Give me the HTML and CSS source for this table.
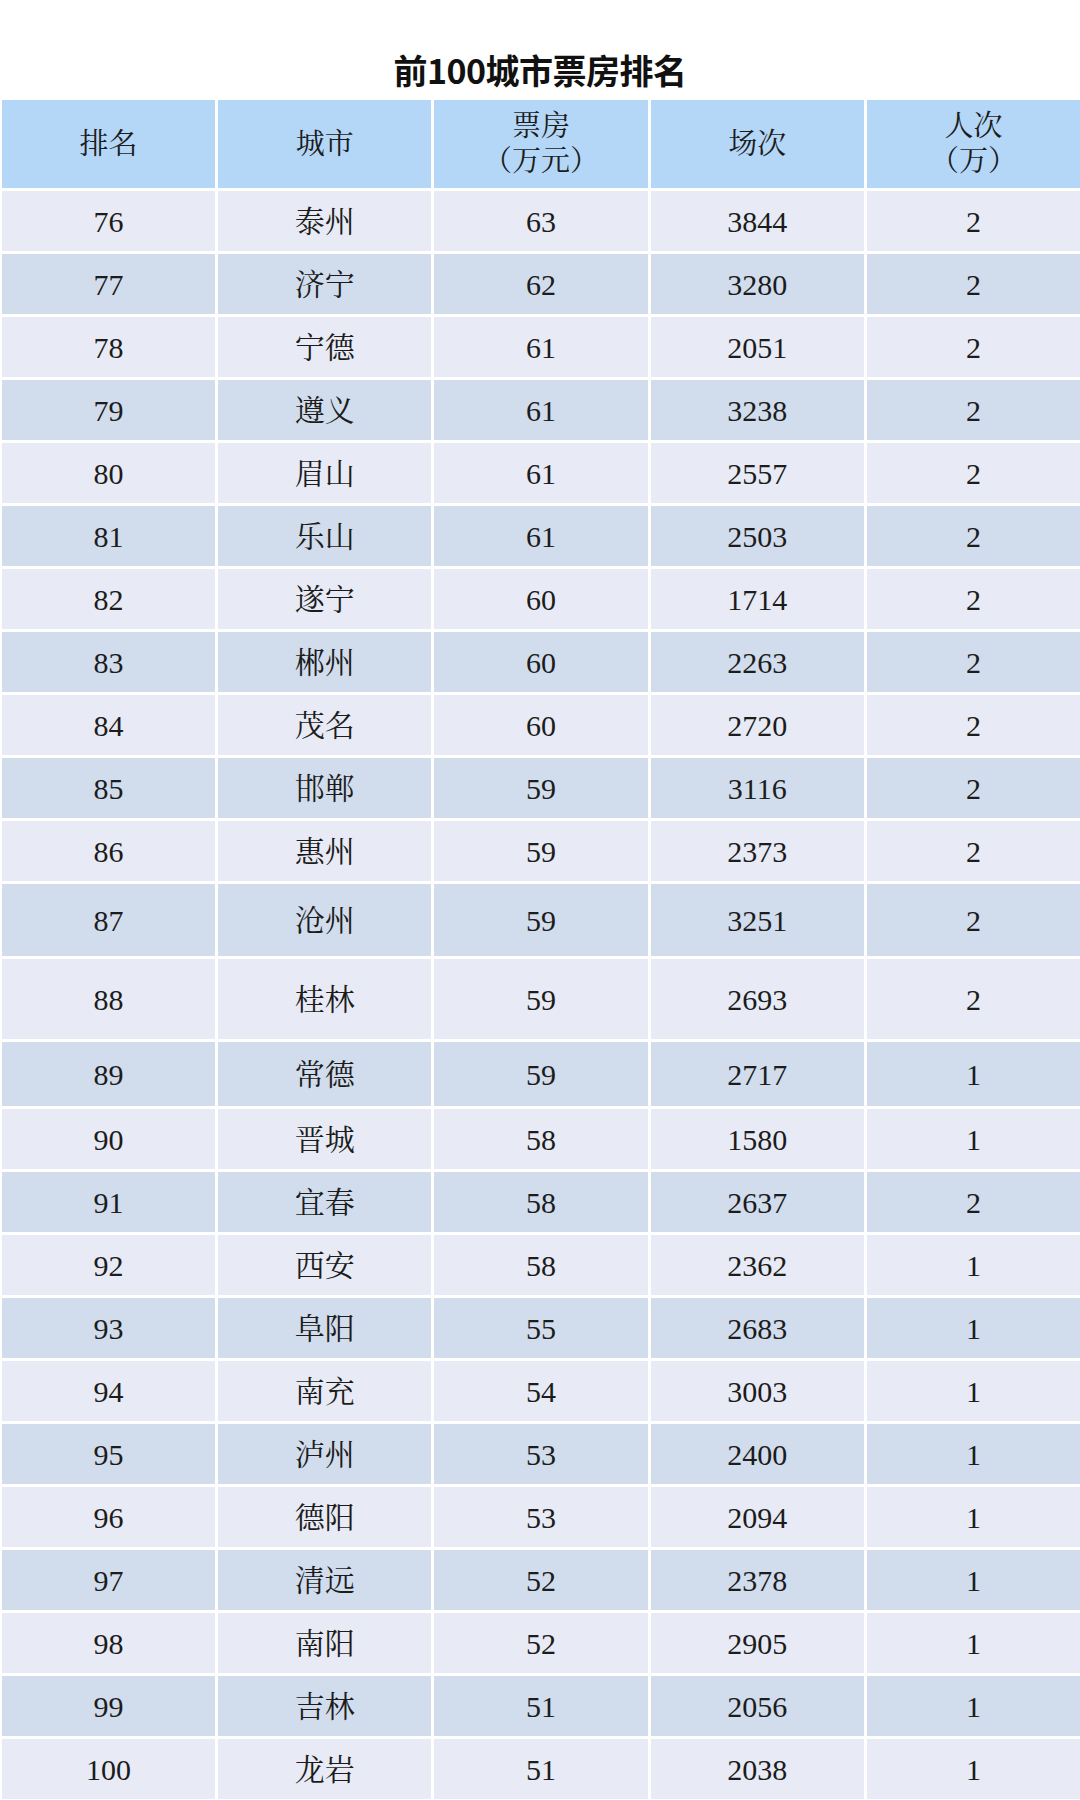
FILE: index.html
```html
<!DOCTYPE html>
<html lang="zh-CN">
<head>
<meta charset="utf-8">
<title>前100城市票房排名</title>
<link rel="stylesheet" href="styles.css">
</head>
<body>
<div class="page">
  <h1 class="title">前100城市票房排名</h1>
  <div class="table">
    <div class="cell head">排名</div>
    <div class="cell head">城市</div>
    <div class="cell head"><span>票房</span><span>（万元）</span></div>
    <div class="cell head">场次</div>
    <div class="cell head"><span>人次</span><span>（万）</span></div>

    <div class="cell odd">76</div><div class="cell odd">泰州</div><div class="cell odd">63</div><div class="cell odd">3844</div><div class="cell odd">2</div>
    <div class="cell even">77</div><div class="cell even">济宁</div><div class="cell even">62</div><div class="cell even">3280</div><div class="cell even">2</div>
    <div class="cell odd">78</div><div class="cell odd">宁德</div><div class="cell odd">61</div><div class="cell odd">2051</div><div class="cell odd">2</div>
    <div class="cell even">79</div><div class="cell even">遵义</div><div class="cell even">61</div><div class="cell even">3238</div><div class="cell even">2</div>
    <div class="cell odd">80</div><div class="cell odd">眉山</div><div class="cell odd">61</div><div class="cell odd">2557</div><div class="cell odd">2</div>
    <div class="cell even">81</div><div class="cell even">乐山</div><div class="cell even">61</div><div class="cell even">2503</div><div class="cell even">2</div>
    <div class="cell odd">82</div><div class="cell odd">遂宁</div><div class="cell odd">60</div><div class="cell odd">1714</div><div class="cell odd">2</div>
    <div class="cell even">83</div><div class="cell even">郴州</div><div class="cell even">60</div><div class="cell even">2263</div><div class="cell even">2</div>
    <div class="cell odd">84</div><div class="cell odd">茂名</div><div class="cell odd">60</div><div class="cell odd">2720</div><div class="cell odd">2</div>
    <div class="cell even">85</div><div class="cell even">邯郸</div><div class="cell even">59</div><div class="cell even">3116</div><div class="cell even">2</div>
    <div class="cell odd">86</div><div class="cell odd">惠州</div><div class="cell odd">59</div><div class="cell odd">2373</div><div class="cell odd">2</div>
    <div class="cell even">87</div><div class="cell even">沧州</div><div class="cell even">59</div><div class="cell even">3251</div><div class="cell even">2</div>
    <div class="cell odd">88</div><div class="cell odd">桂林</div><div class="cell odd">59</div><div class="cell odd">2693</div><div class="cell odd">2</div>
    <div class="cell even">89</div><div class="cell even">常德</div><div class="cell even">59</div><div class="cell even">2717</div><div class="cell even">1</div>
    <div class="cell odd">90</div><div class="cell odd">晋城</div><div class="cell odd">58</div><div class="cell odd">1580</div><div class="cell odd">1</div>
    <div class="cell even">91</div><div class="cell even">宜春</div><div class="cell even">58</div><div class="cell even">2637</div><div class="cell even">2</div>
    <div class="cell odd">92</div><div class="cell odd">西安</div><div class="cell odd">58</div><div class="cell odd">2362</div><div class="cell odd">1</div>
    <div class="cell even">93</div><div class="cell even">阜阳</div><div class="cell even">55</div><div class="cell even">2683</div><div class="cell even">1</div>
    <div class="cell odd">94</div><div class="cell odd">南充</div><div class="cell odd">54</div><div class="cell odd">3003</div><div class="cell odd">1</div>
    <div class="cell even">95</div><div class="cell even">泸州</div><div class="cell even">53</div><div class="cell even">2400</div><div class="cell even">1</div>
    <div class="cell odd">96</div><div class="cell odd">德阳</div><div class="cell odd">53</div><div class="cell odd">2094</div><div class="cell odd">1</div>
    <div class="cell even">97</div><div class="cell even">清远</div><div class="cell even">52</div><div class="cell even">2378</div><div class="cell even">1</div>
    <div class="cell odd">98</div><div class="cell odd">南阳</div><div class="cell odd">52</div><div class="cell odd">2905</div><div class="cell odd">1</div>
    <div class="cell even">99</div><div class="cell even">吉林</div><div class="cell even">51</div><div class="cell even">2056</div><div class="cell even">1</div>
    <div class="cell odd">100</div><div class="cell odd">龙岩</div><div class="cell odd">51</div><div class="cell odd">2038</div><div class="cell odd">1</div>
  </div>
</div>
</body>
</html>
```

FILE: styles.css
```css
html, body {
  margin: 0;
  padding: 0;
  background: #ffffff;
}

.page {
  width: 1080px;
  height: 1800px;
  overflow: hidden;
}

.title {
  margin: 0;
  height: 100px;
  box-sizing: border-box;
  padding-top: 49px;
  line-height: 42px;
  text-align: center;
  font-family: "Noto Sans CJK SC", "Noto Sans", sans-serif;
  font-weight: 700;
  font-size: 34px;
  color: #111111;
  letter-spacing: -0.5px;
}

.table {
  display: grid;
  box-sizing: border-box;
  width: 1080px;
  padding-left: 2px;
  grid-template-columns: repeat(5, 1fr);
  grid-template-rows: 88px repeat(11, 60px) 72px 80px 64px;
  grid-auto-rows: 60px;
  gap: 3px;
}

.cell {
  display: flex;
  flex-direction: column;
  align-items: center;
  justify-content: center;
  font-family: "Liberation Serif", "Noto Serif CJK SC", "Noto Sans CJK SC", serif;
  font-size: 30px;
  color: #1c1c1c;
  line-height: 35px;
}

.head {
  background: #b4d7f8;
  font-size: 29px;
}

.odd {
  background: #e8ebf5;
}

.even {
  background: #d1dded;
}
```
